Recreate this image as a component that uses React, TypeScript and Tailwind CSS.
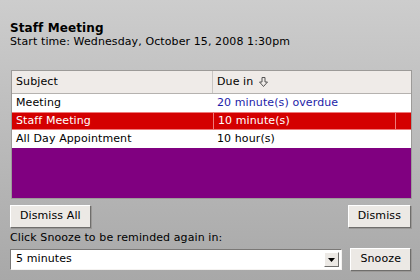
export default function App() {
  const rows = [
    { subject: 'Meeting', due: '20 minute(s) overdue', overdue: true },
    { subject: 'Staff Meeting', due: '10 minute(s)', selected: true },
    { subject: 'All Day Appointment', due: '10 hour(s)' },
  ];

  const btn =
    'h-[23px] px-[9px] bg-[#ece9e5] border border-t-white border-l-white border-r-[#6f6e6c] border-b-[#6f6e6c] shadow-[1px_1px_0_#9a9896]';

  return (
    <div className="w-[420px] h-[280px] bg-gradient-to-b from-[#cdcdcd] to-[#a8a8a8] text-[11px] text-black font-['DejaVu_Sans',sans-serif] tracking-[0.1px] px-[10px] pt-[21px] flex flex-col">
      <div className="font-bold text-[12px] leading-[14px]">Staff Meeting</div>
      <div className="leading-[14px]">Start time: Wednesday, October 15, 2008 1:30pm</div>

      {/* alarm list */}
      <div className="mt-[21px] ml-px mr-[-2px] border border-[#9c9a98] flex flex-col">
        <div className="flex h-[23px] bg-[#efebe8] border-b border-[#b5b2af]">
          <div className="w-[201px] px-[4px] flex items-center border-r border-[#c9c6c3]">Subject</div>
          <div className="flex-1 px-[4px] flex items-center gap-[6px]">
            Due in
            <svg width="9" height="10" viewBox="0 0 9 10" className="text-[#555]">
              <path d="M3 0.5h3v4.5h2.5L4.5 9.5 0.5 5H3z" fill="none" stroke="currentColor" strokeWidth="1" />
            </svg>
          </div>
        </div>
        {rows.map((r) => (
          <div
            key={r.subject}
            className={
              r.selected
                ? 'flex h-[18px] bg-[#d40000] text-white border-y border-[#ee7a7a]'
                : 'flex h-[18px] bg-white'
            }
          >
            <div className="w-[201px] px-[4px] flex items-center">{r.subject}</div>
            <div
              className={
                r.selected
                  ? 'flex-1 px-[4px] flex items-center border-l border-[#ee7a7a]'
                  : 'flex-1 px-[4px] flex items-center'
              }
            >
              <span className={r.overdue ? 'text-[#1c1ca8]' : ''}>{r.due}</span>
            </div>
            {r.selected && <div className="w-[16px] border-l border-[#ee7a7a]" />}
          </div>
        ))}
        <div className="h-[50px] bg-[#800080]" />
      </div>

      <div className="flex justify-between mt-[6px] mr-[-1px]">
        <button className={btn}>Dismiss All</button>
        <button className={btn}>Dismiss</button>
      </div>

      <div className="mt-[3px] leading-[14px]">Click Snooze to be reminded again in:</div>

      <div className="flex items-center justify-between mt-[3px] mr-[-1px]">
        <div className="w-[332px] h-[21px] bg-white border border-t-[#7a7876] border-l-[#7a7876] border-r-[#f4f2f0] border-b-[#f4f2f0] flex items-center">
          <span className="flex-1 px-[5px]">5 minutes</span>
          <div className="w-[15px] h-[15px] mr-[2px] bg-[#ece9e5] border border-t-white border-l-white border-r-[#6f6e6c] border-b-[#6f6e6c] flex items-center justify-center">
            <svg width="7" height="4" viewBox="0 0 7 4">
              <path d="M0 0h7L3.5 4z" fill="#000" />
            </svg>
          </div>
        </div>
        <button className={btn}>Snooze</button>
      </div>
    </div>
  );
}
